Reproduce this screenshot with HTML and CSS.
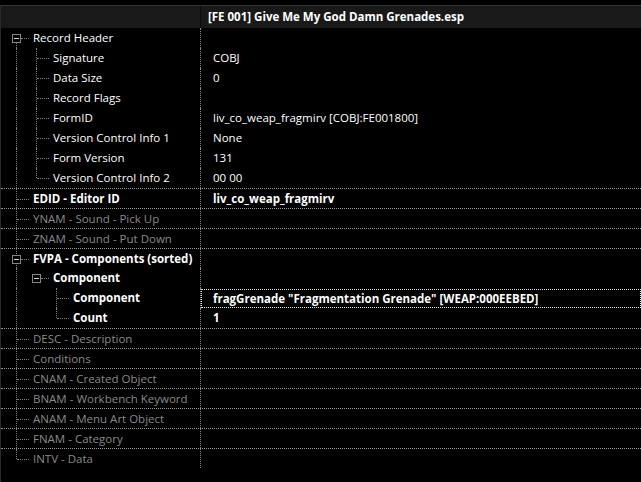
FILE: index.html
```html
<!DOCTYPE html>
<html>
<head>
<meta charset="utf-8">
<link rel="stylesheet" href="styles.css">
</head>
<body>
<div class="view">
  <div class="head">
    <div class="hcell"></div>
    <div class="hcell title">[FE 001] Give Me My God Damn Grenades.esp</div>
  </div>
  <div class="tree">
    <div class="row">
      <div class="name"><span class="g first"><span class="box"></span></span><span class="lbl">Record Header</span></div>
      <div class="val"></div>
    </div>
    <div class="row">
      <div class="name"><span class="g v"></span><span class="g t"></span><span class="lbl">Signature</span></div>
      <div class="val">COBJ</div>
    </div>
    <div class="row">
      <div class="name"><span class="g v"></span><span class="g t"></span><span class="lbl">Data Size</span></div>
      <div class="val">0</div>
    </div>
    <div class="row">
      <div class="name"><span class="g v"></span><span class="g t"></span><span class="lbl">Record Flags</span></div>
      <div class="val"></div>
    </div>
    <div class="row">
      <div class="name"><span class="g v"></span><span class="g t"></span><span class="lbl">FormID</span></div>
      <div class="val">liv_co_weap_fragmirv [COBJ:FE001800]</div>
    </div>
    <div class="row">
      <div class="name"><span class="g v"></span><span class="g t"></span><span class="lbl">Version Control Info 1</span></div>
      <div class="val">None</div>
    </div>
    <div class="row">
      <div class="name"><span class="g v"></span><span class="g t"></span><span class="lbl">Form Version</span></div>
      <div class="val">131</div>
    </div>
    <div class="row">
      <div class="name"><span class="g v"></span><span class="g l"></span><span class="lbl">Version Control Info 2</span></div>
      <div class="val">00 00</div>
    </div>
    <div class="row sep bold">
      <div class="name"><span class="g t"></span><span class="lbl">EDID - Editor ID</span></div>
      <div class="val">liv_co_weap_fragmirv</div>
    </div>
    <div class="row sep dim">
      <div class="name"><span class="g t"></span><span class="lbl">YNAM - Sound - Pick Up</span></div>
      <div class="val"></div>
    </div>
    <div class="row sep dim">
      <div class="name"><span class="g t"></span><span class="lbl">ZNAM - Sound - Put Down</span></div>
      <div class="val"></div>
    </div>
    <div class="row sep bold">
      <div class="name"><span class="g mid"><span class="box"></span></span><span class="lbl">FVPA - Components (sorted)</span></div>
      <div class="val"></div>
    </div>
    <div class="row bold">
      <div class="name"><span class="g v"></span><span class="g solo"><span class="box"></span></span><span class="lbl">Component</span></div>
      <div class="val"></div>
    </div>
    <div class="row bold">
      <div class="name"><span class="g v"></span><span class="g"></span><span class="g t"></span><span class="lbl">Component</span></div>
      <div class="val"><span class="focus">fragGrenade "Fragmentation Grenade" [WEAP:000EEBED]</span></div>
    </div>
    <div class="row bold">
      <div class="name"><span class="g v"></span><span class="g"></span><span class="g l"></span><span class="lbl">Count</span></div>
      <div class="val">1</div>
    </div>
    <div class="row sep dim">
      <div class="name"><span class="g t"></span><span class="lbl">DESC - Description</span></div>
      <div class="val"></div>
    </div>
    <div class="row sep dim">
      <div class="name"><span class="g t"></span><span class="lbl">Conditions</span></div>
      <div class="val"></div>
    </div>
    <div class="row sep dim">
      <div class="name"><span class="g t"></span><span class="lbl">CNAM - Created Object</span></div>
      <div class="val"></div>
    </div>
    <div class="row sep dim">
      <div class="name"><span class="g t"></span><span class="lbl">BNAM - Workbench Keyword</span></div>
      <div class="val"></div>
    </div>
    <div class="row sep dim">
      <div class="name"><span class="g t"></span><span class="lbl">ANAM - Menu Art Object</span></div>
      <div class="val"></div>
    </div>
    <div class="row sep dim">
      <div class="name"><span class="g t"></span><span class="lbl">FNAM - Category</span></div>
      <div class="val"></div>
    </div>
    <div class="row sep dim">
      <div class="name"><span class="g l"></span><span class="lbl">INTV - Data</span></div>
      <div class="val"></div>
    </div>
  </div>
</div>
</body>
</html>
```
FILE: styles.css
```css
html, body {
  margin: 0;
  padding: 0;
  background: #000;
  width: 641px;
  height: 482px;
  overflow: hidden;
}
body {
  font-family: "Open Sans", "Noto Sans", sans-serif;
  font-size: 11.5px;
  color: #fff;
  padding-top: 5px;
  box-sizing: border-box;
}
.view {
  border-left: 1px solid #2a2a2a;
  margin-left: 0;
  height: 477px;
  box-sizing: border-box;
}
.head {
  display: grid;
  grid-template-columns: 199px 1fr;
  height: 23px;
  border-top: 1px solid #343434;
  background: #191919;
  box-sizing: border-box;
}
.hcell {
  display: flex;
  align-items: center;
}
.title {
  border-left: 1px solid #0a0a0a;
  padding-left: 7px;
  font-weight: 700;
  padding-bottom: 1px;
}
.tree {
  display: flex;
  flex-direction: column;
}
.row {
  display: grid;
  grid-template-columns: 199px 1fr;
  height: 20px;
  box-sizing: border-box;
}
.row.sep {
  border-top: 1px dotted #9a9a9a;
}
.row.bold { font-weight: 700; }
.row.dim { color: #8a8a8a; }
.name {
  display: flex;
  padding-left: 5px;
  height: 100%;
  white-space: nowrap;
}
.lbl {
  padding-left: 7px;
  display: flex;
  align-items: center;
  padding-bottom: 1px;
}
.val {
  border-left: 1px dotted #8a8a8a;
  padding-left: 12px;
  display: flex;
  align-items: center;
  white-space: nowrap;
  padding-bottom: 1px;
}
.row.bold .val:has(.focus) { padding: 0; }
.focus {
  flex: 1;
  align-self: stretch;
  display: flex;
  align-items: center;
  border: 1px dotted #e6e6e6;
  padding-left: 11px;
  margin-top: 1px;
}
.g {
  position: relative;
  width: 20px;
  flex: none;
  height: 100%;
}
.g.v::before, .g.t::before, .g.l::before,
.g.first::before, .g.mid::before {
  content: "";
  position: absolute;
  left: 10px;
  top: 0;
  bottom: 0;
  border-left: 1px dotted #808080;
}
.g.l::before { bottom: auto; height: 10px; }
.g.first::before { top: 14px; }
.g.t::after, .g.l::after,
.g.first::after, .g.mid::after, .g.solo::after {
  content: "";
  position: absolute;
  left: 11px;
  width: 12px;
  top: 10px;
  border-top: 1px dotted #808080;
}
.g.first::after, .g.mid::after, .g.solo::after {
  left: 15px;
  width: 8px;
}
.box {
  position: absolute;
  left: 6px;
  top: 6px;
  width: 9px;
  height: 9px;
  box-sizing: border-box;
  border: 1px solid #858585;
  background: #000;
  z-index: 1;
}
.box::after {
  content: "";
  position: absolute;
  left: 1px;
  right: 1px;
  top: 3px;
  height: 1px;
  background: #d8d8d8;
}
```
